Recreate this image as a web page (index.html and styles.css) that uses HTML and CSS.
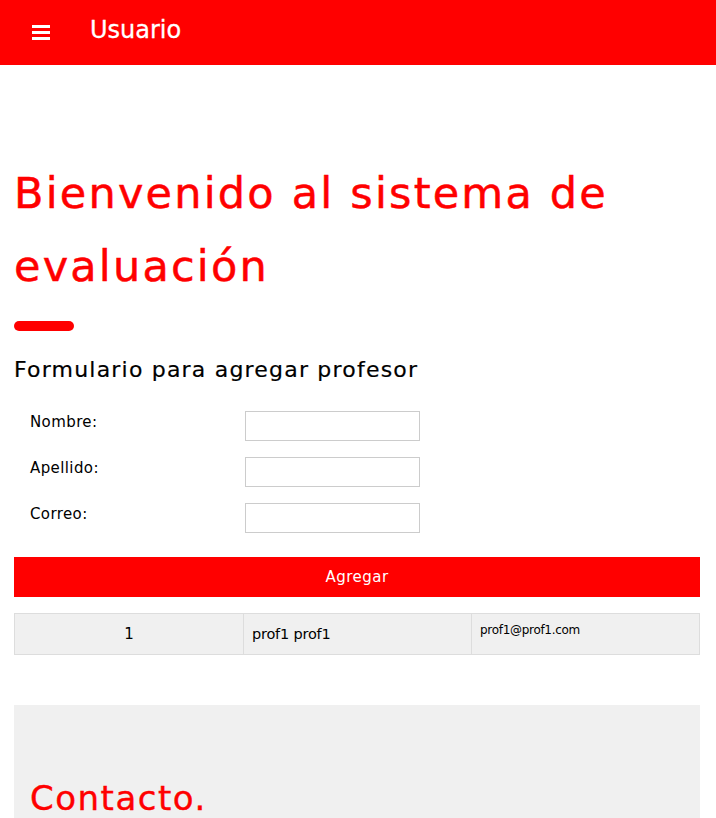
FILE: index.html
```html
<!DOCTYPE html>
<html lang="es">
<head>
<meta charset="utf-8">
<title>Usuario</title>
<link rel="stylesheet" href="styles.css">
</head>
<body>
<header class="topbar">
  <span class="menu-icon" aria-label="Menú">
    <svg width="18" height="15" viewBox="0 0 18 15"><rect x="0" y="0" width="18" height="3" fill="#fff"/><rect x="0" y="6" width="18" height="3" fill="#fff"/><rect x="0" y="12" width="18" height="3" fill="#fff"/></svg>
  </span>
  <span class="topbar-title">Usuario</span>
</header>
<main class="content">
  <h1 class="welcome">Bienvenido al sistema de evaluación</h1>
  <div class="accent"></div>
  <h2 class="form-title">Formulario para agregar profesor</h2>
  <form class="prof-form">
    <div class="form-row"><label>Nombre:</label><input type="text"></div>
    <div class="form-row"><label>Apellido:</label><input type="text"></div>
    <div class="form-row"><label>Correo:</label><input type="text"></div>
    <button type="button" class="btn">Agregar</button>
  </form>
  <div class="table">
    <div class="cell cell-id">1</div>
    <div class="cell cell-name">prof1 prof1</div>
    <div class="cell cell-mail">prof1@prof1.com</div>
  </div>
  <section class="contact">
    <h2 class="contact-title">Contacto.</h2>
  </section>
</main>
</body>
</html>
```
FILE: styles.css
```css
* { box-sizing: border-box; }
body {
  margin: 0;
  font-family: "DejaVu Sans", "Open Sans", sans-serif;
  color: #000;
  background: #fff;
}
.topbar {
  height: 65px;
  background: #ff0000;
  display: flex;
  align-items: center;
  padding-left: 32px;
}
.menu-icon { display: flex; width: 18px; height: 15px; margin-top: -1px; }
.topbar-title {
  color: #fff;
  font-size: 24px;
  line-height: 30px;
  margin-left: 40px;
  margin-top: -6px;
  -webkit-text-stroke: 0.3px currentColor;
}
.content { padding: 0 16px 0 14px; }
.welcome {
  margin: 90px 0 0;
  font-size: 43px;
  font-weight: 400;
  line-height: 73px;
  letter-spacing: 2.2px;
  color: #ff0000;
  padding-top: 2px;
  -webkit-text-stroke: 0.5px currentColor;
}
.accent {
  width: 60px;
  height: 10px;
  border-radius: 5px;
  background: #ff0000;
  margin-top: 18px;
}
.form-title {
  margin: 21px 0 0;
  font-size: 22px;
  font-weight: 400;
  line-height: 36px;
  letter-spacing: 1.2px;
  -webkit-text-stroke: 0.2px currentColor;
}
.prof-form { margin-top: 23px; }
.form-row {
  display: flex;
  align-items: flex-start;
  height: 30px;
  margin-bottom: 16px;
}
.form-row label {
  width: 231px;
  padding-left: 16px;
  font-size: 15px;
  line-height: 22px;
  letter-spacing: 0.4px;
}
.form-row input {
  width: 175px;
  height: 30px;
  border: 1px solid #ccc;
  margin: 0;
  padding: 0 6px;
}
.btn {
  display: block;
  width: 100%;
  height: 40px;
  margin-top: 24px;
  border: 0;
  background: #ff0000;
  color: #fff;
  font-family: inherit;
  font-size: 15px;
  letter-spacing: 0.5px;
}
.table {
  margin-top: 16px;
  display: grid;
  grid-template-columns: 1fr 1fr 1fr;
  background: #f0f0f0;
  border: 1px solid #ddd;
}
.cell {
  height: 40px;
  padding: 8px;
  border-left: 1px solid #ddd;
}
.cell-id { border-left: 0; text-align: center; font-size: 15px; line-height: 24px; }
.cell-name { font-size: 14.5px; line-height: 24px; letter-spacing: -0.2px; }
.cell-mail { font-size: 12px; line-height: 16px; letter-spacing: -0.3px; }
.contact {
  margin-top: 50px;
  background: #f0f0f0;
  height: 160px;
  padding: 70px 16px 0;
}
.contact-title {
  margin: 0;
  font-size: 34px;
  font-weight: 400;
  line-height: 46px;
  letter-spacing: 1.5px;
  color: #ff0000;
  -webkit-text-stroke: 0.4px currentColor;
}
```
